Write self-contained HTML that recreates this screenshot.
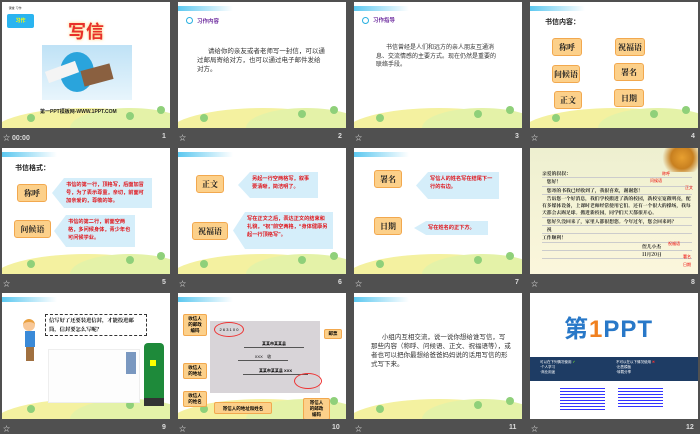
<!DOCTYPE html>
<html><head><meta charset="utf-8"><style>
*{margin:0;padding:0;box-sizing:border-box}
body{width:700px;height:433px;background:#505050;position:relative;overflow:hidden;font-family:"Liberation Sans","Noto Sans CJK SC",sans-serif}
.s{position:absolute;width:168px;height:126px;background:#fff;overflow:hidden}
.a{position:absolute}
.hdr{position:absolute;left:0;top:4px;width:55px;height:5px;background:linear-gradient(90deg,#5cc8f0,#fff)}
.hill{position:absolute;left:-10px;width:190px;bottom:-30px;height:50px;border-radius:50%;background:#f4f1a0}
.hill2{position:absolute;right:-20px;bottom:-20px;width:120px;height:40px;border-radius:50%;background:#e4f2a8}
.tree{position:absolute;width:8px;height:8px;border-radius:50%;background:#8fd07a}
.bar{position:absolute;color:#ddd;font-size:7px;font-weight:bold}
.box{position:absolute;background:#fcd08a;border:1px solid #f2a84e;border-radius:3px;font-family:"Noto Serif CJK SC",serif;font-weight:bold;font-size:8px;color:#222;display:flex;align-items:center;justify-content:center}
.co{position:absolute;background:#d5eefa;color:#e0161c;font-size:5.2px;font-weight:bold;line-height:8px;padding:3px 4px 3px 14px;clip-path:polygon(0 50%,12px 0,100% 0,100% 100%,12px 100%)}
.t{position:absolute;font-size:6px;color:#333;line-height:8px}
.lab{position:absolute;background:#fcd08a;border:1px solid #f2a84e;border-radius:2px;font-size:4.5px;font-weight:bold;text-align:center;line-height:6px;padding:1px}
</style></head><body>

<!-- Slide 1 -->
<div class="s" style="left:2px;top:2px">
<div class="a" style="left:0;top:4px;font-size:3px;color:#333">&nbsp;&nbsp;&nbsp;&nbsp;&nbsp;&nbsp;&nbsp;&nbsp;课堂 习作</div>
<div class="a" style="left:5px;top:12px;width:27px;height:14px;background:#2ab4f0;border-radius:2px;color:#ff0;font-size:5px;text-align:center;line-height:14px;font-weight:bold">习作</div>
<div class="a" style="left:66px;top:16px;font-size:18px;color:#e8302a;font-weight:bold;text-shadow:0 0 3px #fc6">写信</div>
<div class="a" style="left:40px;top:43px;width:90px;height:55px;background:linear-gradient(#bfe2f6,#e8f5fc)"></div>
<div class="a" style="left:58px;top:50px;width:34px;height:40px;border-radius:50%;background:#2aa4dc"></div>
<div class="a" style="left:44px;top:64px;width:32px;height:12px;background:#f4f4f4;transform:rotate(-20deg)"></div>
<div class="a" style="left:80px;top:65px;width:30px;height:16px;background:#8a6040;transform:rotate(-15deg)"></div>
<div class="hill"></div><div class="hill2"></div>
<div class="tree" style="left:25px;top:112px"></div><div class="tree" style="left:124px;top:110px"></div><div class="tree" style="left:155px;top:104px"></div>
<div class="a" style="left:38px;top:106px;font-size:5px;font-weight:bold;color:#222">第一PPT模板网-WWW.1PPT.COM</div>
</div>
<div class="bar" style="left:3px;top:133px">☆ 00:00</div><div class="bar" style="left:162px;top:133px">1</div>

<!-- Slide 2 -->
<div class="s" style="left:178px;top:2px">
<div class="hdr"></div><div class="hill"></div><div class="hill2"></div>
<div class="tree" style="left:22px;top:112px"></div><div class="tree" style="left:120px;top:108px"></div><div class="tree" style="left:152px;top:104px"></div>
<div class="a" style="left:8px;top:15px;width:7px;height:7px;border:1px solid #2ab0e0;border-radius:50%"></div>
<div class="a" style="left:19px;top:15px;font-size:5.5px;color:#7030a0;font-weight:bold">习作内容</div>
<div class="t" style="left:19px;top:45px;width:128px;font-size:6.5px;line-height:9px">&nbsp;&nbsp;&nbsp;&nbsp;&nbsp;&nbsp;请给你的亲友或者老师写一封信，可以通过邮局寄给对方，也可以通过电子邮件发给对方。</div>
</div>
<div class="bar" style="left:179px;top:133px">☆</div><div class="bar" style="left:338px;top:133px">2</div>

<!-- Slide 3 -->
<div class="s" style="left:354px;top:2px">
<div class="hdr"></div><div class="hill"></div><div class="hill2"></div>
<div class="tree" style="left:22px;top:112px"></div><div class="tree" style="left:120px;top:108px"></div><div class="tree" style="left:152px;top:104px"></div>
<div class="a" style="left:8px;top:15px;width:7px;height:7px;border:1px solid #2ab0e0;border-radius:50%"></div>
<div class="a" style="left:19px;top:14px;font-size:5.5px;color:#7030a0;font-weight:bold">习作指导</div>
<div class="t" style="left:22px;top:42px;width:122px;font-size:6px;line-height:8.5px">&nbsp;&nbsp;&nbsp;&nbsp;&nbsp;&nbsp;书信曾经是人们和远方的亲人朋友互通消息、交流情感的主要方式。现在仍然是重要的联络手段。</div>
</div>
<div class="bar" style="left:355px;top:133px">☆</div><div class="bar" style="left:515px;top:133px">3</div>

<!-- Slide 4 -->
<div class="s" style="left:530px;top:2px">
<div class="hdr"></div><div class="hill"></div><div class="hill2"></div>
<div class="tree" style="left:22px;top:112px"></div><div class="tree" style="left:120px;top:108px"></div><div class="tree" style="left:152px;top:104px"></div>
<div class="a" style="left:15px;top:15px;font-size:7px;font-weight:bold;color:#222">书信内容：</div>
<div class="box" style="left:22px;top:36px;width:30px;height:18px">称呼</div>
<div class="box" style="left:85px;top:36px;width:30px;height:18px">祝福语</div>
<div class="box" style="left:22px;top:63px;width:28px;height:18px">问候语</div>
<div class="box" style="left:84px;top:61px;width:30px;height:18px">署名</div>
<div class="box" style="left:24px;top:89px;width:28px;height:18px">正文</div>
<div class="box" style="left:84px;top:87px;width:30px;height:18px">日期</div>
</div>
<div class="bar" style="left:531px;top:133px">☆</div><div class="bar" style="left:691px;top:133px">4</div>

<!-- Slide 5 -->
<div class="s" style="left:2px;top:148px">
<div class="hdr"></div><div class="hill"></div><div class="hill2"></div>
<div class="tree" style="left:25px;top:112px"></div><div class="tree" style="left:124px;top:108px"></div><div class="tree" style="left:155px;top:104px"></div>
<div class="a" style="left:13px;top:15px;font-size:7px;font-weight:bold;color:#222">书信格式：</div>
<div class="box" style="left:15px;top:36px;width:30px;height:18px">称呼</div>
<div class="co" style="left:50px;top:30px;width:100px;height:30px">书信的第一行，顶格写，后面加冒号，为了表示尊重，亲切，前面可加亲爱的，尊敬的等。</div>
<div class="box" style="left:12px;top:72px;width:37px;height:18px">问候语</div>
<div class="co" style="left:52px;top:67px;width:81px;height:32px">书信的第二行，前面空两格，多问候身体，青少年也可问候学业。</div>
</div>
<div class="bar" style="left:3px;top:279px">☆</div><div class="bar" style="left:162px;top:279px">5</div>

<!-- Slide 6 -->
<div class="s" style="left:178px;top:148px">
<div class="hdr"></div><div class="hill"></div><div class="hill2"></div>
<div class="tree" style="left:22px;top:112px"></div><div class="tree" style="left:120px;top:108px"></div><div class="tree" style="left:152px;top:104px"></div>
<div class="box" style="left:18px;top:27px;width:28px;height:18px">正文</div>
<div class="co" style="left:60px;top:24px;width:80px;height:26px">另起一行空两格写，叙事要清晰，简洁明了。</div>
<div class="box" style="left:14px;top:74px;width:36px;height:18px">祝福语</div>
<div class="co" style="left:55px;top:64px;width:100px;height:37px">写在正文之后，表达正文的结束和礼貌，“祝”前空两格，“身体健康另起一行顶格写”。</div>
</div>
<div class="bar" style="left:179px;top:279px">☆</div><div class="bar" style="left:338px;top:279px">6</div>

<!-- Slide 7 -->
<div class="s" style="left:354px;top:148px">
<div class="hdr"></div><div class="hill"></div><div class="hill2"></div>
<div class="tree" style="left:22px;top:112px"></div><div class="tree" style="left:120px;top:108px"></div><div class="tree" style="left:152px;top:104px"></div>
<div class="box" style="left:20px;top:22px;width:28px;height:18px">署名</div>
<div class="co" style="left:62px;top:24px;width:83px;height:27px">写信人的姓名写在结尾下一行的右边。</div>
<div class="box" style="left:20px;top:69px;width:28px;height:18px">日期</div>
<div class="co" style="left:60px;top:73px;width:74px;height:14px;padding-top:3px">写在姓名的正下方。</div>
</div>
<div class="bar" style="left:355px;top:279px">☆</div><div class="bar" style="left:515px;top:279px">7</div>

<!-- Slide 8 -->
<div class="s" style="left:530px;top:148px;background:linear-gradient(#eef0d0,#fbf6dc)">
<div class="a" style="left:128px;top:0;width:40px;height:24px;background:radial-gradient(circle at 60% 40%,#e8a030,#c88020 40%,transparent 70%)"></div>
<div class="a" style="left:12px;top:22px;width:150px;font-size:4.8px;line-height:7.3px;font-weight:bold;color:#222;font-family:'Noto Serif CJK SC',serif">
<div style="border-bottom:1px solid #ccc">亲爱的叔叔：</div>
<div style="border-bottom:1px solid #ccc">&nbsp;&nbsp;&nbsp;&nbsp;您好！</div>
<div style="border-bottom:1px solid #ccc">&nbsp;&nbsp;&nbsp;&nbsp;您寄的书我已经收到了，我很喜欢，谢谢您！</div>
<div style="border-bottom:1px solid #ccc">&nbsp;&nbsp;&nbsp;&nbsp;告诉您一个好消息，我们学校搬进了新的校园，新校室宽敞明亮，配有多媒体设备，上课时老师经常使用它们。还有一个很大的操场，我每天都会去踢足球。搬进新校园，同学们天天都很开心。</div>
<div style="border-bottom:1px solid #ccc">&nbsp;&nbsp;&nbsp;&nbsp;您好久没回来了，家里人都很想您。今年过年，您会回来吗？</div>
<div style="border-bottom:1px solid #ccc">&nbsp;&nbsp;&nbsp;&nbsp;祝</div>
<div style="border-bottom:1px solid #ccc">工作顺利！</div>
<div style="border-bottom:1px solid #ccc;padding-left:100px">侄儿小杰</div>
<div style="border-bottom:1px solid #ccc;padding-left:100px">11月20日</div>
</div>
<div class="a" style="left:132px;top:23px;font-size:4px;color:#e00">称呼</div>
<div class="a" style="left:120px;top:30px;font-size:4px;color:#e00">问候语</div>
<div class="a" style="left:155px;top:37px;font-size:4px;color:#e00">正文</div>
<div class="a" style="left:138px;top:93px;font-size:4px;color:#e00">祝福语</div>
<div class="a" style="left:153px;top:106px;font-size:4px;color:#e00">署名</div>
<div class="a" style="left:153px;top:114px;font-size:4px;color:#e00">日期</div>
</div>
<div class="bar" style="left:531px;top:279px">☆</div><div class="bar" style="left:691px;top:279px">8</div>

<!-- Slide 9 -->
<div class="s" style="left:2px;top:293px">
<div class="hdr"></div><div class="hill"></div><div class="hill2"></div>
<div class="tree" style="left:25px;top:112px"></div><div class="tree" style="left:124px;top:108px"></div>
<div class="a" style="left:21px;top:26px;width:12px;height:12px;border-radius:50%;background:#f8c898;border-top:3px solid #e8a040"></div>
<div class="a" style="left:23px;top:38px;width:10px;height:16px;background:#3a8ad8"></div>
<div class="a" style="left:24px;top:54px;width:8px;height:14px;background:#a07040"></div>
<div class="a" style="left:43px;top:21px;width:102px;height:22px;border:1px dashed #333;font-size:5.3px;font-weight:bold;line-height:9px;padding:1px 3px;font-family:'Noto Serif CJK SC',serif">信写好了还要装进信封，才能投进邮筒，信封要怎么写呢？</div>
<div class="a" style="left:46px;top:56px;width:92px;height:54px;border:1px solid #eee;background:#fdfdfd"></div>
<div class="a" style="left:124px;top:59px;width:10px;height:22px;background:#7a98c0"></div>
<div class="a" style="left:142px;top:50px;width:20px;height:63px;background:#1e8a3a;border-radius:4px 4px 0 0"></div>
<div class="a" style="left:148px;top:67px;width:6px;height:6px;background:#ff0"></div>
<div class="a" style="left:142px;top:105px;width:20px;height:8px;background:#333"></div>
</div>
<div class="bar" style="left:3px;top:424px">☆</div><div class="bar" style="left:162px;top:424px">9</div>

<!-- Slide 10 -->
<div class="s" style="left:178px;top:293px">
<div class="hdr"></div><div class="hill"></div><div class="hill2"></div>
<div class="tree" style="left:22px;top:112px"></div><div class="tree" style="left:152px;top:104px"></div>
<div class="a" style="left:32px;top:28px;width:110px;height:72px;background:#d8d4d8"></div>
<div class="a" style="left:36px;top:29px;width:30px;height:15px;border:1px solid #e33;border-radius:50%;font-size:4px;text-align:center;line-height:13px">2 6 3 1 0 0</div>
<div class="a" style="left:66px;top:48px;width:60px;border-bottom:1px solid #555;font-size:4px;text-align:center;font-weight:bold">某某市某某县</div>
<div class="a" style="left:60px;top:61px;width:50px;border-bottom:1px solid #555;font-size:4px;text-align:center">XXX&nbsp;&nbsp;&nbsp;&nbsp;收</div>
<div class="a" style="left:65px;top:75px;width:65px;border-bottom:1px solid #555;font-size:4px;text-align:center;font-weight:bold">某某市某某县 XXX</div>
<div class="a" style="left:116px;top:80px;width:28px;height:16px;border:1px solid #e33;border-radius:50%"></div>
<div class="lab" style="left:5px;top:21px;width:24px">收信人<br>的邮政<br>编码</div>
<div class="lab" style="left:146px;top:36px;width:18px">邮票</div>
<div class="lab" style="left:5px;top:70px;width:24px">收信人<br>的地址</div>
<div class="lab" style="left:5px;top:98px;width:24px">收信人<br>的姓名</div>
<div class="lab" style="left:36px;top:109px;width:58px;padding-top:3px">寄信人的地址和姓名</div>
<div class="lab" style="left:125px;top:105px;width:27px">寄信人<br>的邮政<br>编码</div>
</div>
<div class="bar" style="left:179px;top:424px">☆</div><div class="bar" style="left:332px;top:424px">10</div>

<!-- Slide 11 -->
<div class="s" style="left:354px;top:293px">
<div class="hdr"></div><div class="hill"></div><div class="hill2"></div>
<div class="tree" style="left:22px;top:112px"></div><div class="tree" style="left:120px;top:108px"></div><div class="tree" style="left:152px;top:104px"></div>
<div class="t" style="left:17px;top:40px;width:140px;font-size:6.5px;line-height:9px">&nbsp;&nbsp;&nbsp;&nbsp;&nbsp;&nbsp;小组内互相交流，说一说你想给谁写信，写那些内容（称呼、问候语、正文、祝福语等），或者也可以把你最想给爸爸妈妈说的话用写信的形式写下来。</div>
</div>
<div class="bar" style="left:355px;top:424px">☆</div><div class="bar" style="left:509px;top:424px">11</div>

<!-- Slide 12 -->
<div class="s" style="left:530px;top:293px">
<div class="a" style="left:34px;top:24px;font-size:24px;line-height:26px;font-weight:bold;color:#2878c8;letter-spacing:1px">第<span style="color:#f08020">1</span>PPT</div>
<div class="a" style="left:0;top:64px;width:168px;height:24px;background:#1e3c64"></div>
<div class="a" style="left:10px;top:67px;font-size:3.5px;color:#fff;line-height:5px">可以在下列情况使用 <span style="color:#6c3">✔</span><br>·个人学习<br>·商业用途</div>
<div class="a" style="left:86px;top:67px;font-size:3.5px;color:#fff;line-height:5px">不可以在以下情况使用 <span style="color:#e33">✖</span><br>·出售模板<br>·转载分享</div>
<div class="a" style="left:30px;top:95px;width:45px;height:24px;background:repeating-linear-gradient(#33f 0 1px,transparent 1px 3px)"></div>
<div class="a" style="left:88px;top:95px;width:45px;height:20px;background:repeating-linear-gradient(#33f 0 1px,transparent 1px 3px)"></div>
</div>
<div class="bar" style="left:531px;top:424px">☆</div><div class="bar" style="left:686px;top:424px">12</div>

</body></html>
